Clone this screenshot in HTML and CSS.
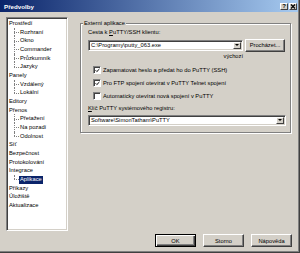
FILE: index.html
```html
<!DOCTYPE html>
<html lang="cs">
<head>
    <meta charset="UTF-8">
    <title>Předvolby</title>
    <link rel="stylesheet" href="styles.css">
</head>
<body>
<div class="window">
    <div class="titlebar">
        <span class="title">Předvolby</span>
        <span class="tbtn">?</span>
        <span class="tbtn">
            <svg width="6" height="5" viewBox="0 0 6 5"><path d="M1 0.5 L5 4.5 M5 0.5 L1 4.5" stroke="#000" stroke-width="1.2"/></svg>
        </span>
    </div>
    <div class="main">
        <ul class="tree">
            <li>Prostředí
                <ul>
                    <li>Rozhraní</li>
                    <li>Okno</li>
                    <li>Commander</li>
                    <li>Průzkumník</li>
                    <li>Jazyky</li>
                </ul>
            </li>
            <li>Panely
                <ul>
                    <li>Vzdálený</li>
                    <li>Lokální</li>
                </ul>
            </li>
            <li>Editory</li>
            <li>Přenos
                <ul>
                    <li>Přetažení</li>
                    <li>Na pozadí</li>
                    <li>Odolnost</li>
                </ul>
            </li>
            <li>Síť</li>
            <li>Bezpečnost</li>
            <li>Protokolování</li>
            <li>Integrace
                <ul>
                    <li><span class="selected">Aplikace</span></li>
                </ul>
            </li>
            <li>Příkazy</li>
            <li>Úložiště</li>
            <li>Aktualizace</li>
        </ul>
        <div class="page">
            <fieldset class="group">
                <legend>Externí aplikace</legend>
                <div class="label">Cesta k <u>P</u>uTTY/SSH klientu:</div>
                <div class="path-row">
                    <div class="combo path">
                        <span class="combo-text">C:\Programy\putty_063.exe</span>
                        <span class="drop"><i></i></span>
                    </div>
                    <span class="button browse">Procházet...</span>
                </div>
                <div class="default">výchozí</div>
                <div class="check-row"><span class="check on"><svg width="7" height="7" viewBox="0 0 7 7"><path d="M0.8 3.2 L2.6 5 L6.2 1.4" fill="none" stroke="#000" stroke-width="1.4"/></svg></span>Zapamatovat heslo a předat ho do PuTTY (SSH)</div>
                <div class="check-row"><span class="check on"><svg width="7" height="7" viewBox="0 0 7 7"><path d="M0.8 3.2 L2.6 5 L6.2 1.4" fill="none" stroke="#000" stroke-width="1.4"/></svg></span>Pro FTP spojení otevírat v PuTTY Telnet spojení</div>
                <div class="check-row"><span class="check"></span>Automaticky otevírat nová spojení v PuTTY</div>
                <div class="label second"><u>K</u>líč PuTTY systémového registru:</div>
                <div class="combo registry">
                    <span class="combo-text">Software\SimonTatham\PuTTY</span>
                    <span class="drop"><i></i></span>
                </div>
            </fieldset>
        </div>
    </div>
    <div class="buttons">
        <span class="button default-btn">OK</span>
        <span class="button">Storno</span>
        <span class="button">Nápověda</span>
    </div>
</div>
</body>
</html>
```
FILE: styles.css
```css
html, body {
    margin: 0;
    background: #d4d0c8;
    font-family: "Liberation Sans", Arial, sans-serif;
    font-size: 5.75px;
    color: #000;
}
.window {
    width: 300px;
    height: 253px;
    box-sizing: border-box;
    display: flex;
    flex-direction: column;
    background: #d4d0c8;
    border-right: 1px solid #404040;
    border-bottom: 1px solid #404040;
    box-shadow: inset -1px -1px #808080;
    padding: 0 1px 1px 0;
}
.titlebar {
    height: 12px;
    display: flex;
    align-items: center;
    padding: 0 1px 0 4px;
    background: linear-gradient(to right, #0a246a, #a6caf0);
    color: #fff;
    font-weight: bold;
    font-size: 6.2px;
}
.title {
    flex: 1;
}
.tbtn {
    width: 8px;
    height: 7px;
    box-sizing: border-box;
    margin-left: 1px;
    display: flex;
    align-items: center;
    justify-content: center;
    background: #d4d0c8;
    color: #000;
    font-size: 6px;
    line-height: 1;
    border: 1px solid;
    border-color: #fff #404040 #404040 #fff;
}
.main {
    flex: 1;
    display: flex;
    padding: 5px 0 0 6px;
}
.tree {
    width: 62px;
    height: 214px;
    box-sizing: border-box;
    margin: 0;
    padding: 1px 0 0 1px;
    list-style: none;
    background: #fff;
    border: 1px solid;
    border-color: #808080 #fff #fff #808080;
    box-shadow: inset 1px 1px #404040, inset -1px -1px #d4d0c8;
    line-height: 8.67px;
    white-space: nowrap;
    overflow: hidden;
}
.tree > li {
    padding-left: 1px;
}
.tree ul {
    list-style: none;
    margin: 0;
    padding: 0;
}
.tree ul li {
    position: relative;
    padding-left: 11px;
}
.tree ul li::before {
    content: "";
    position: absolute;
    left: 5px;
    top: 0;
    bottom: 0;
    border-left: 1px dotted #808080;
}
.tree ul li:last-child::before {
    bottom: 50%;
}
.tree ul li::after {
    content: "";
    position: absolute;
    left: 5px;
    top: 50%;
    width: 5px;
    border-top: 1px dotted #808080;
}
.selected {
    display: inline-block;
    margin-left: -1px;
    padding: 0 1px;
    line-height: 7.5px;
    background: #0a246a;
    color: #fff;
}
.page {
    margin-left: 12px;
    padding-top: 3px;
}
.group {
    width: 211px;
    box-sizing: border-box;
    margin: 0;
    padding: 2px 4px 6px 7px;
    border: 1px solid #808080;
    box-shadow: 1px 1px #fff, inset 1px 1px #fff;
}
.group legend {
    margin-left: -5px;
    padding: 0 1px;
    line-height: 7px;
    background: #d4d0c8;
}
.label {
    line-height: 7px;
    margin-bottom: 2.5px;
}
.label.second {
    margin-top: 2.5px;
    margin-bottom: 3px;
}
.path-row {
    display: flex;
    align-items: center;
    gap: 2px;
    height: 13px;
}
.combo {
    height: 11px;
    box-sizing: border-box;
    display: flex;
    align-items: center;
    background: #fff;
    border: 1px solid;
    border-color: #808080 #fff #fff #808080;
    box-shadow: inset 1px 1px #404040, inset -1px -1px #d4d0c8;
    padding: 1px;
}
.combo.path {
    width: 155px;
}
.combo.registry {
    width: 198px;
}
.combo-text {
    flex: 1;
    padding-left: 1px;
    white-space: nowrap;
    line-height: 7px;
}
.drop {
    width: 8px;
    height: 7px;
    box-sizing: border-box;
    display: flex;
    align-items: center;
    justify-content: center;
    background: #d4d0c8;
    border: 1px solid;
    border-color: #fff #404040 #404040 #fff;
}
.drop i {
    width: 0;
    height: 0;
    border-left: 2px solid transparent;
    border-right: 2px solid transparent;
    border-top: 2px solid #000;
}
.button {
    display: flex;
    align-items: center;
    justify-content: center;
    box-sizing: border-box;
    background: #d4d0c8;
    border: 1px solid;
    border-color: #fff #404040 #404040 #fff;
    box-shadow: inset -1px -1px #808080;
}
.browse {
    width: 40px;
    height: 13px;
}
.default {
    width: 155px;
    text-align: right;
    line-height: 7px;
    margin-top: 1.5px;
    margin-bottom: 3px;
}
.check-row {
    height: 13px;
    display: flex;
    align-items: center;
    padding-left: 5px;
}
.check {
    width: 8px;
    height: 8px;
    box-sizing: border-box;
    margin-right: 2px;
    display: flex;
    align-items: center;
    justify-content: center;
    background: #fff;
    border: 1px solid;
    border-color: #808080 #fff #fff #808080;
    box-shadow: inset 1px 1px #404040;
}
.check svg {
    margin: 1px 0 0 1px;
}
.buttons {
    display: flex;
    justify-content: flex-end;
    gap: 7px;
    padding: 3px 6px 4px 0;
}
.buttons .button {
    width: 41px;
    height: 13px;
}
.default-btn {
    border-color: #000;
    box-shadow: inset 1px 1px #fff, inset -1px -1px #404040, inset -2px -2px #808080;
}
```
